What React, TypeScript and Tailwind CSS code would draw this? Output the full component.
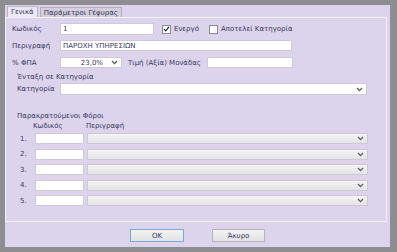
import React from "react";

const Chevron = () => (
  <svg width="7" height="5" viewBox="0 0 7 5" className="shrink-0">
    <path d="M1 1 L3.5 3.6 L6 1" fill="none" stroke="#5a5a66" strokeWidth="1.3" />
  </svg>
);

const Check = ({ checked }: { checked: boolean }) => (
  <div className="w-[9px] h-[9px] bg-white border border-[#8a8a96] flex items-center justify-center">
    {checked && (
      <svg width="8" height="8" viewBox="0 0 8 8">
        <path d="M1.2 4.2 L3.2 6.2 L6.8 1.6" fill="none" stroke="#222" strokeWidth="1.4" />
      </svg>
    )}
  </div>
);

const Input = ({ className = "", children }: { className?: string; children?: React.ReactNode }) => (
  <div className={"bg-white border border-[#cfcad8] flex items-center px-[2px] " + className}>{children}</div>
);

const Select = ({ className = "", children }: { className?: string; children?: React.ReactNode }) => (
  <div className={"border border-[#cdc9d4] flex items-center pr-[3px] " + className}>
    <div className="flex-1 flex items-center justify-end pr-[8px]">{children}</div>
    <Chevron />
  </div>
);

export default function App() {
  const rows = [1, 2, 3, 4, 5];
  return (
    <div
      className="w-[397px] h-[252px] bg-[#8e8e92] pt-[5px] pl-[5px] pr-[7px] pb-[5px] text-[7px] leading-[8px] text-[#38385e]"
      style={{ fontFamily: '"DejaVu Sans", "Liberation Sans", sans-serif' }}
    >
      <div className="w-[385px] h-[242px] bg-[#dcd4ec] flex flex-col">
        {/* tabs */}
        <div className="h-[12px] flex items-end pl-[2px]">
          <div className="h-[11px] px-[3px] flex items-center bg-[#ece8f4] border border-b-0 border-[#b8b4c4]">Γενικά</div>
          <div className="h-[10px] ml-[2px] px-[3px] flex items-center bg-[#d2ceda] border border-b-0 border-[#b2aebe]">
            Παράμετροι Γέφυρας
          </div>
        </div>
        {/* panel */}
        <div className="w-[382px] h-[205px] border border-[#f3f0f8] flex flex-col pl-[6px]">
          <div className="mt-[5px] h-[12px] flex items-center">
            <div className="w-[48px]">Κωδικός</div>
            <Input className="w-[94px] h-[12px]">1</Input>
            <div className="ml-[8px]"><Check checked /></div>
            <div className="ml-[3px]">Ενεργό</div>
            <div className="ml-[10px]"><Check checked={false} /></div>
            <div className="ml-[3px]">Αποτελεί Κατηγορία</div>
          </div>
          <div className="mt-[5px] h-[11px] flex items-center">
            <div className="w-[48px]">Περιγραφή</div>
            <Input className="w-[232px] h-[11px]">ΠΑΡΟΧΗ ΥΠΗΡΕΣΙΩΝ</Input>
          </div>
          <div className="mt-[6px] h-[11px] flex items-center">
            <div className="w-[48px]">% ΦΠΑ</div>
            <Select className="w-[62px] h-[11px] bg-white">23,0%</Select>
            <div className="ml-[6px] w-[79px]">Τιμή (Αξία) Μονάδας</div>
            <Input className="w-[86px] h-[11px]" />
          </div>
          <div className="mt-[5px] h-[8px] pl-[5px]">Ένταξη σε Κατηγορία</div>
          <div className="mt-[2px] h-[12px] flex items-center pl-[5px]">
            <div className="w-[43px]">Κατηγορία</div>
            <Select className="w-[307px] h-[12px] bg-white" />
          </div>
          <div className="mt-[17px] h-[8px] pl-[5px]">Παρακρατούμενοι Φόροι</div>
          <div className="mt-[2px] h-[8px] flex">
            <div className="w-[21px]" />
            <div className="w-[53px]">Κωδικός</div>
            <div>Περιγραφή</div>
          </div>
          <div className="mt-[3px] flex flex-col gap-[4.5px]">
            {rows.map((n) => (
              <div key={n} className="h-[11px] flex items-center">
                <div className="w-[23px] pl-[8px]">{n}.</div>
                <Input className="w-[49px] h-[11px]" />
                <div className="w-[3px]" />
                <Select className="w-[281px] h-[11px] bg-gradient-to-b from-[#f4f4f4] to-[#e4e4e6]" />
              </div>
            ))}
          </div>
        </div>
        {/* buttons */}
        <div className="mt-[7px] h-[13px] flex">
          <div className="ml-[125px] w-[54px] h-[13px] border border-[#7ea8d8] bg-gradient-to-b from-[#f2f2f2] to-[#e2e2e2] flex items-center justify-center">
            OK
          </div>
          <div className="ml-[28px] w-[53px] h-[13px] border border-[#b4b4bc] bg-gradient-to-b from-[#f2f2f2] to-[#e2e2e2] flex items-center justify-center">
            Άκυρο
          </div>
        </div>
      </div>
    </div>
  );
}
